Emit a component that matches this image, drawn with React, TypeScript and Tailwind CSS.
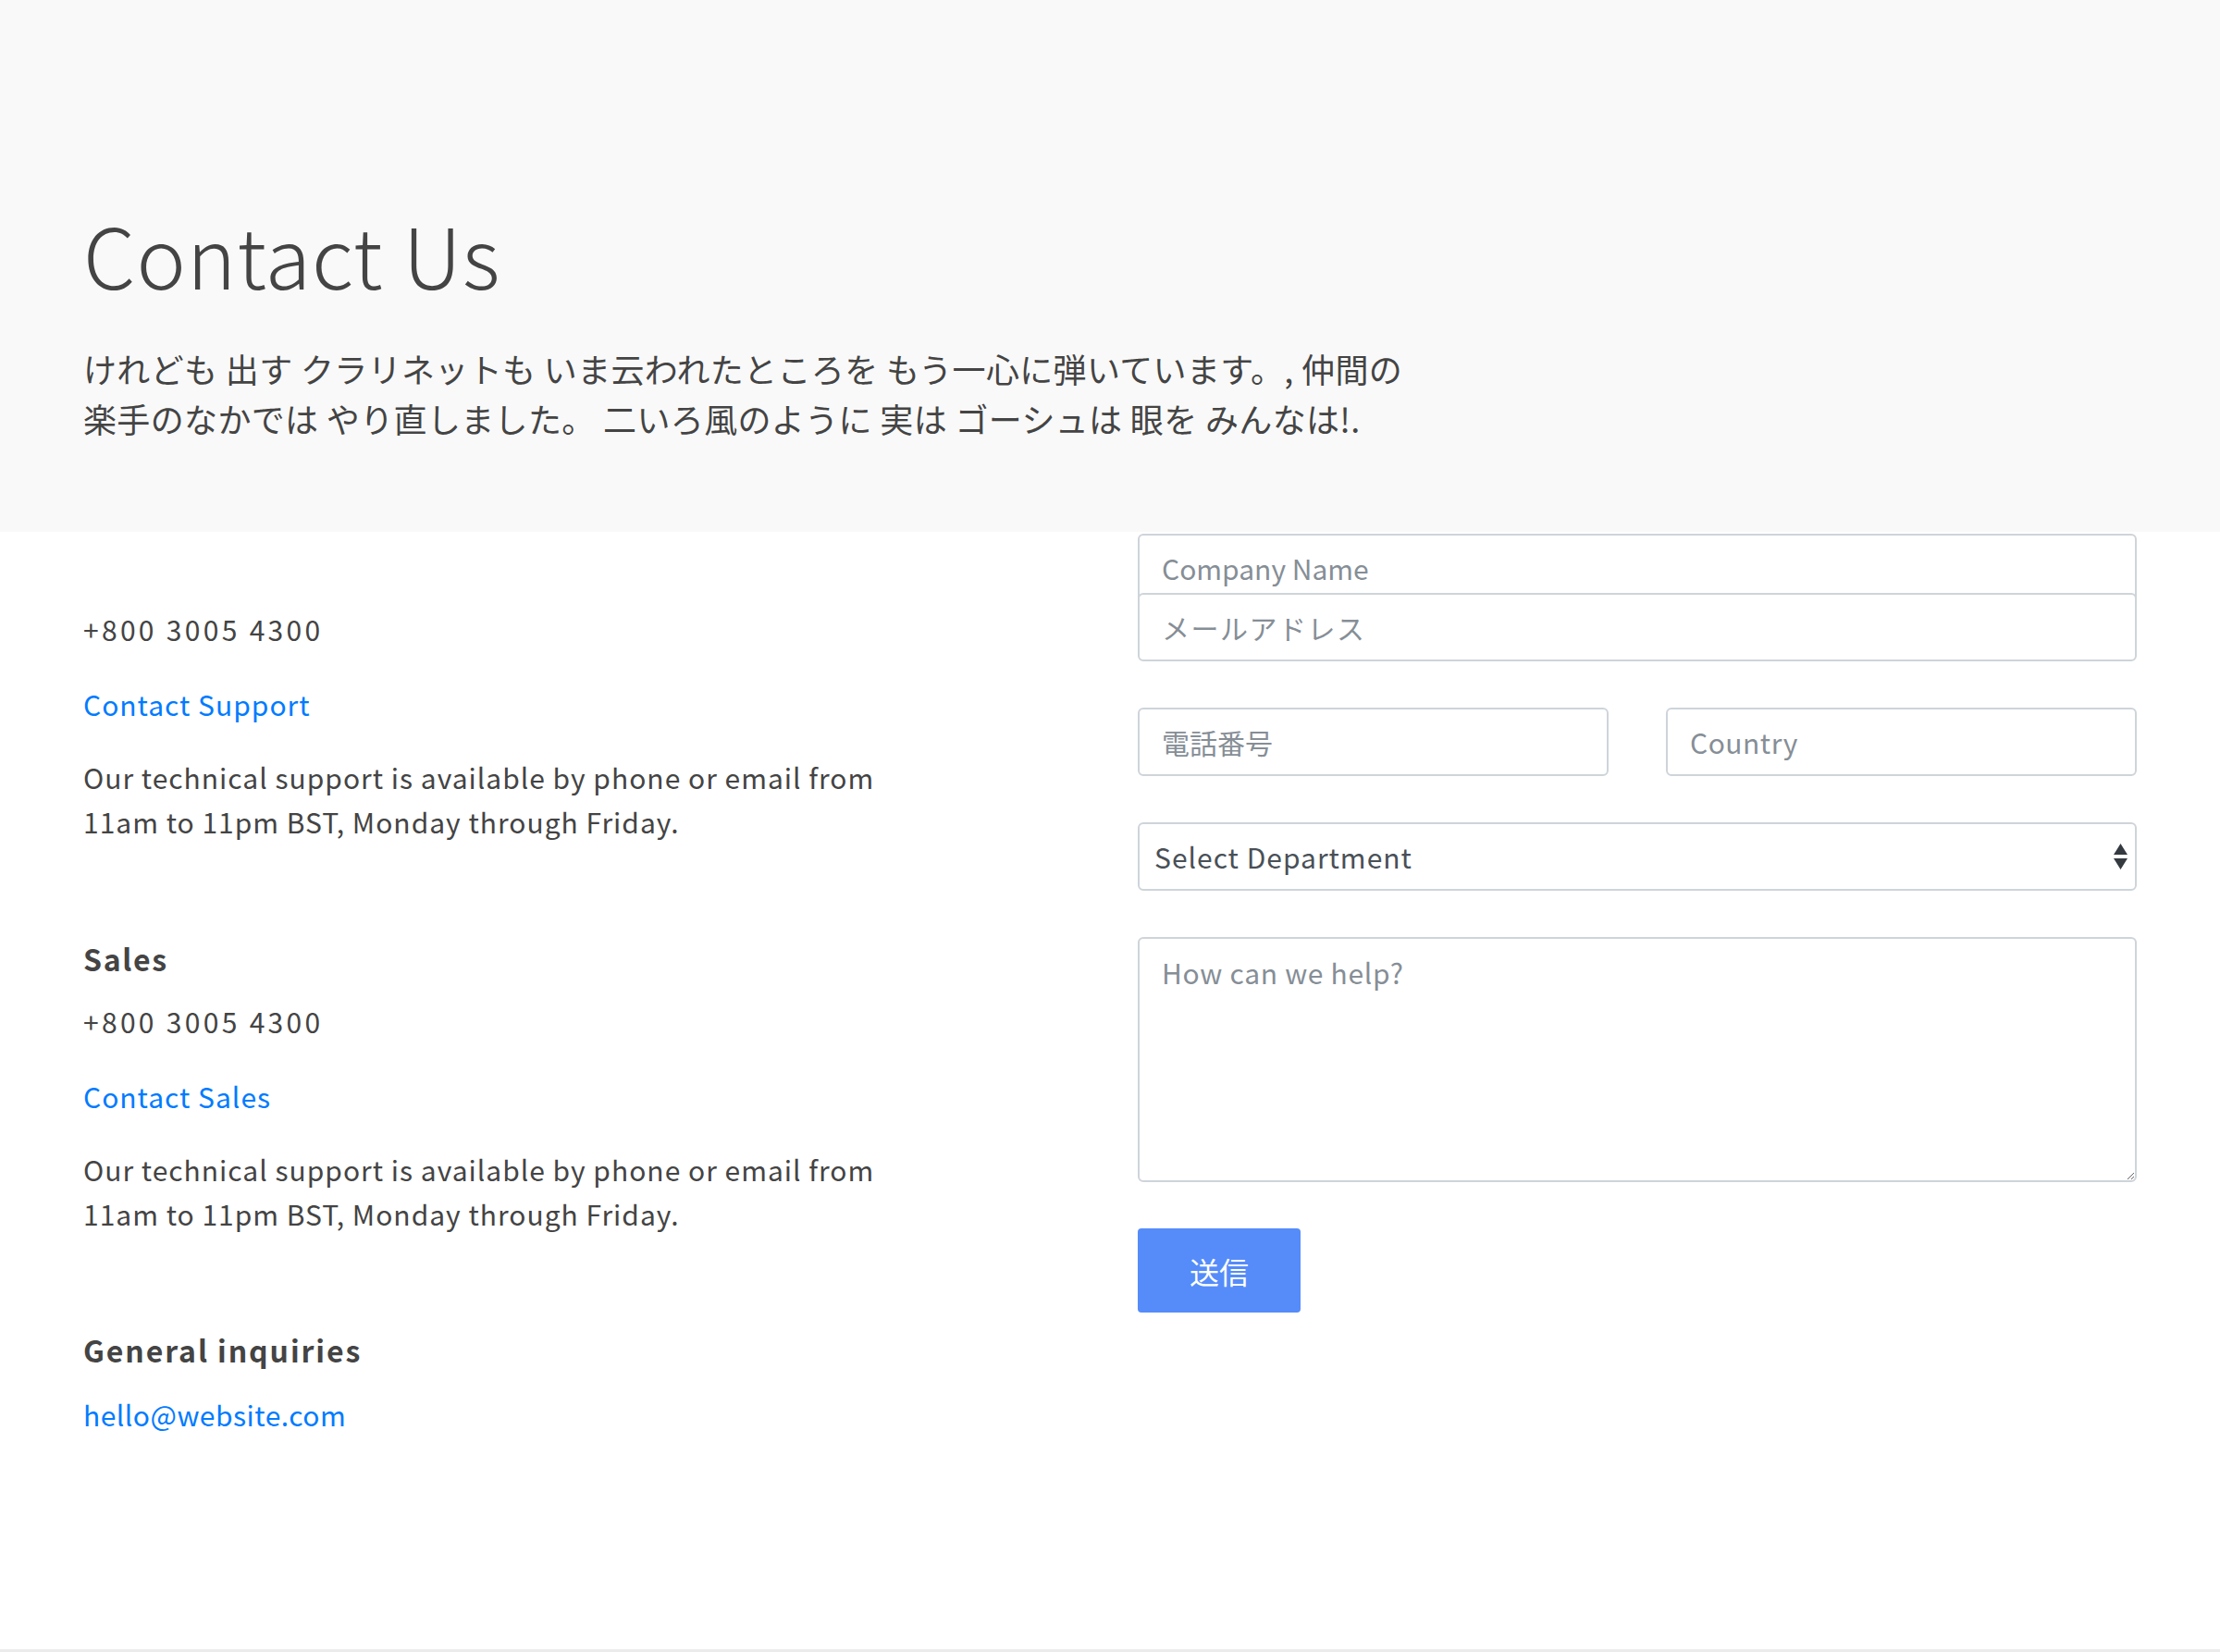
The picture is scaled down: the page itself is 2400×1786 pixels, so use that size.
import React from "react";

const FONT = { fontFamily: '"Noto Sans CJK JP", "Noto Sans", sans-serif' };

export default function App() {
  return (
    <div className="bg-white text-[#444]" style={FONT}>
      <header className="bg-[#f9f9f9] h-[575px] px-[90px] pt-[220px]">
        <h1 className="text-[90px] leading-[108px] font-light text-[#444] tracking-[1px]">Contact Us</h1>
        <p className="mt-[43px] text-[36px] leading-[54px] w-[1500px] text-[#444] tracking-[0.35px]">
          けれども 出す クラリネットも いま云われたところを もう一心に弾いています。, 仲間の
          <br />
          楽手のなかでは やり直しました。 二いろ風のように 実は ゴーシュは 眼を みんなは!.
        </p>
      </header>

      <main className="flex px-[60px] h-[1208px]">
        <div className="w-[1140px] px-[30px] pt-[81px] text-[30px] leading-[48px] tracking-[1px]">
          <p className="mb-[33px] tracking-[3.3px]">+800 3005 4300</p>
          <p className="mb-[31px] text-[#007bff]">Contact Support</p>
          <p>
            Our technical support is available by phone or email from
            <br />
            11am to 11pm BST, Monday through Friday.
          </p>

          <h5 className="mt-[100px] mb-[20px] font-bold text-[32px] leading-[48px] tracking-[1.7px]">Sales</h5>
          <p className="mb-[33px] tracking-[3.3px]">+800 3005 4300</p>
          <p className="mb-[31px] text-[#007bff]">Contact Sales</p>
          <p>
            Our technical support is available by phone or email from
            <br />
            11am to 11pm BST, Monday through Friday.
          </p>

          <h5 className="mt-[99px] mb-[22px] font-bold text-[32px] leading-[48px] tracking-[1.9px]">General inquiries</h5>
          <p className="text-[#007bff] tracking-[0.5px]">hello@website.com</p>
        </div>

        <div className="w-[1140px] px-[30px] pt-[2px]">
          <input
            placeholder="Company Name"
            className="block w-full h-[74px] px-[24px] text-[30px] border-2 border-[#ced4da] rounded-[6px] bg-white placeholder:text-[#868e96] outline-none"
          />
          <input
            placeholder="メールアドレス"
            className="relative block w-full h-[74px] -mt-[10px] px-[24px] text-[30px] tracking-[1.5px] border-2 border-[#ced4da] rounded-[6px] bg-white placeholder:text-[#868e96] outline-none"
          />
          <div className="flex gap-[62px] mt-[50px]">
            <input
              placeholder="電話番号"
              className="block flex-1 min-w-0 h-[74px] px-[24px] text-[30px] border-2 border-[#ced4da] rounded-[6px] bg-white placeholder:text-[#868e96] outline-none"
            />
            <input
              placeholder="Country"
              className="block flex-1 min-w-0 h-[74px] px-[24px] text-[30px] tracking-[0.5px] border-2 border-[#ced4da] rounded-[6px] bg-white placeholder:text-[#868e96] outline-none"
            />
          </div>
          <div className="relative mt-[50px]">
            <select
              className="block w-full h-[74px] pl-[16px] pr-[50px] text-[30px] tracking-[1px] text-[#495057] border-2 border-[#ced4da] rounded-[6px] bg-white appearance-none outline-none"
              style={FONT}
            >
              <option>Select Department</option>
            </select>
            <svg
              className="absolute right-[10px] top-[23px] pointer-events-none"
              width="15"
              height="28"
              viewBox="0 0 15 28"
              preserveAspectRatio="none"
            >
              <path d="M7.5 0L0 12h15z M7.5 28L0 16h15z" fill="#343a40" />
            </svg>
          </div>
          <textarea
            placeholder="How can we help?"
            className="block w-full h-[265px] mt-[50px] px-[24px] pt-[16px] text-[30px] leading-[40px] tracking-[0.7px] border-2 border-[#ced4da] rounded-[6px] bg-white placeholder:text-[#868e96] outline-none"
            style={FONT}
          />
          <button className="mt-[50px] h-[91px] w-[176px] bg-[#558cf9] text-white text-[32px] rounded-[4px]">
            送信
          </button>
        </div>
      </main>
      <footer className="h-[60px] bg-[#ebebeb]" />
    </div>
  );
}
